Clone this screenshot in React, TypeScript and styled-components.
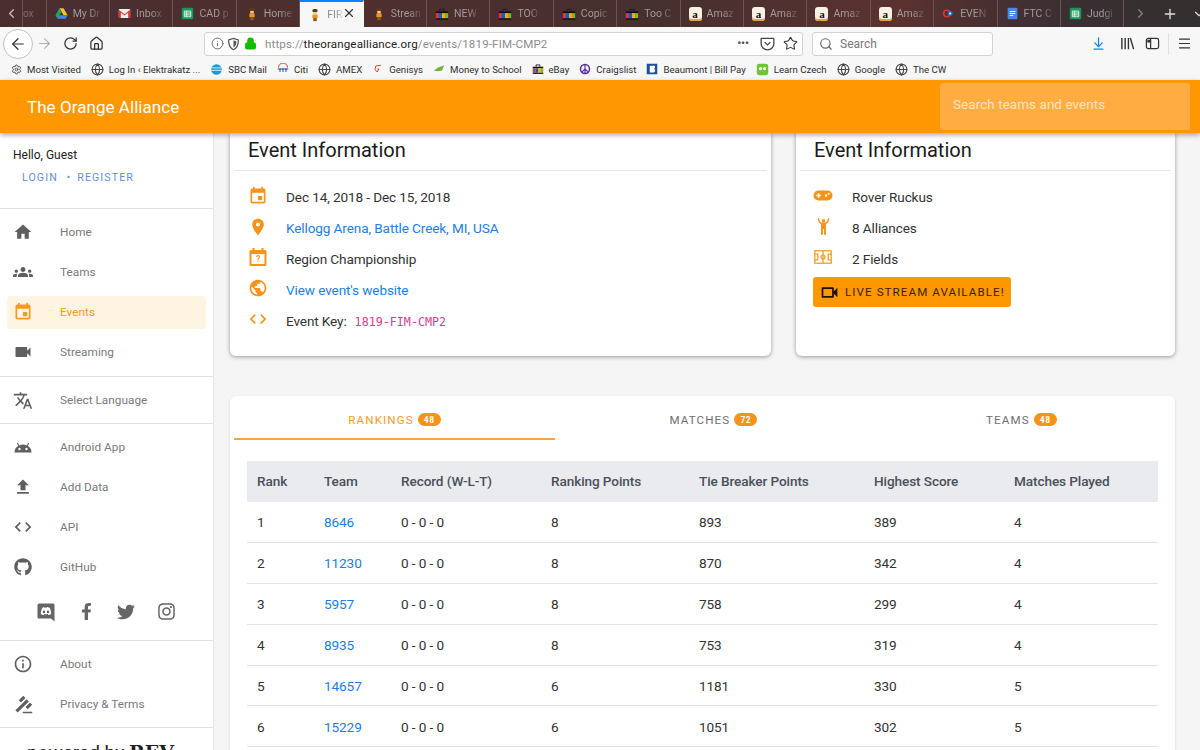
import React from "react";
import styled, { createGlobalStyle } from "styled-components";
import { ArrowLeft, ArrowRight, RotateCw, Home as HomeLine, Info, Lock, Star, Search, ArrowDownToLine, Menu, X, Plus, ChevronDown, ChevronRight, ChevronLeft, Globe, Settings } from "lucide-react";
import { MdHome, MdGroups, MdEvent, MdVideocam, MdOutlineVideocam, MdTranslate, MdFileUpload, MdCode, MdInfoOutline, MdGavel, MdPlace, MdPublic } from "react-icons/md";
import { FaGithub, FaFacebookF, FaTwitter, FaInstagram } from "react-icons/fa";

const Global = createGlobalStyle`
  html, body { margin: 0; padding: 0; background: #f5f5f6; overflow: hidden; }
  * { box-sizing: border-box; }
  a { text-decoration: none; }
`;

const Page = styled.div`
  width: 1200px; height: 750px; overflow: hidden; display: flex; flex-direction: column;
  font-family: Roboto, "Liberation Sans", sans-serif;
`;
const TabStrip = styled.div`
  height: 27px; flex: none; display: flex; align-items: stretch; color: #a9a0a0;
  background: linear-gradient(90deg, #4a2e2f 0%, #4f2f30 30%, #46302f 55%, #5a3230 75%, #3b2f33 88%, #33302f 100%);
`;
const TabBack = styled.div`
  width: 23px; flex: none; display: flex; align-items: center; justify-content: center; color: #c9c2c2;
  border-right: 1px solid #6d5554;
`;
const StubTab = styled.div`
  width: 23.7px; flex: none; font-size: 10px; display: flex; align-items: center; color: #7e6c6c;
  border-right: 1px solid #6d5554;
`;
const BrowserTab = styled.div<{ $active?: boolean }>`
  width: 63.4px; flex: none; display: flex; align-items: center; gap: 5px; padding-left: 8px; white-space: nowrap;
  font-size: 10.5px; position: relative;
  border-right: 1px solid ${p => (p.$active ? "transparent" : "#6d5554")};
  background: ${p => (p.$active ? "#f7f7f8" : "transparent")};
  color: ${p => (p.$active ? "#8a8a8a" : "#a39a9a")};
  border-top: ${p => (p.$active ? "2px solid #0a84ff" : "0")};
`;
const TabLabel = styled.span`
  -webkit-mask-image: linear-gradient(90deg, #000 60%, rgba(0,0,0,.25) 100%);
  mask-image: linear-gradient(90deg, #000 60%, rgba(0,0,0,.25) 100%);
`;
const TabClose = styled.span`
  position: absolute; right: 7px; top: 4px; color: #333; display: flex;
`;
const StripEnd = styled.div`
  flex: 1; display: flex; align-items: center; color: #ddd; padding-left: 9px; gap: 14px;
`;
const NavBar = styled.div`
  height: 33px; flex: none; background: #f7f7f8; display: flex; align-items: center; color: #333;
`;
const BackCircle = styled.div`
  width: 30px; height: 30px; margin-left: 3px; flex: none; border-radius: 50%; border: 1px solid #c2c2c2; background: #fff;
  display: flex; align-items: center; justify-content: center;
`;
const NavIcon = styled.span<{ $gap: number; $dim?: boolean; $blue?: boolean }>`
  display: flex; flex: none; margin-left: ${p => p.$gap}px;
  color: ${p => (p.$blue ? "#0a84ff" : p.$dim ? "#b0b0b0" : "#333")};
`;
const UrlBar = styled.div`
  width: 599px; height: 24px; margin-left: 100px; flex: none; background: #fff; border: 1px solid #d3d3d3; border-radius: 3px;
  display: flex; align-items: center; padding: 0 4px 0 6px; font-size: 11.6px; color: #8d8d8d; letter-spacing: .12px;
`;
const UrlHost = styled.span` color: #222; `;
const UrlText = styled.span` margin-left: 8px; flex: 1; white-space: nowrap; `;
const UrlDots = styled.span` font-weight: 700; color: #555; letter-spacing: 0; margin-right: 11px; font-size: 11px; `;
const SearchBar = styled.div`
  width: 181px; height: 24px; margin-left: 9px; flex: none; background: #fff; border: 1px solid #d3d3d3; border-radius: 3px;
  display: flex; align-items: center; gap: 7px; padding-left: 6px; font-size: 12px; color: #777;
`;
const NavDivider = styled.span`
  width: 1px; height: 22px; background: #e0e0e0; margin-left: 8px; flex: none;
`;
const Bookmarks = styled.div`
  height: 20px; flex: none; background: #f7f7f8; display: flex; align-items: center; gap: 10px; padding: 0 0 2px 11px;
  font-size: 9.65px; color: #2e2e2e; white-space: nowrap;
`;
const Bookmark = styled.span`
  display: flex; align-items: center; gap: 5px;
`;
const Amazon = styled.span`
  width: 13px; height: 14px; border-radius: 3px; background: #f8f0e2; color: #111; font: 700 11px "Liberation Serif", serif;
  box-shadow: inset 0 -2px #e8a33d; display: flex; align-items: center; justify-content: center; flex: none;
`;
const Header = styled.header`
  height: 53px; flex: none; background: #ff9800; display: flex; align-items: center; justify-content: space-between;
  padding: 0 10px 0 27px; position: relative; z-index: 2; box-shadow: 0 2px 5px rgba(0,0,0,.35);
`;
const Brand = styled.div`
  color: #fff; font-size: 17px; letter-spacing: .05px;
`;
const HeaderSearch = styled.div`
  width: 250px; height: 47px; background: #ffad42; border-radius: 3px; color: #ffe5c2; font-size: 13.4px; letter-spacing: .1px;
  display: flex; align-items: center; padding: 0 0 4px 13px;
`;
const Body = styled.div`
  flex: 1; min-height: 0; display: flex;
`;
const Side = styled.aside`
  width: 214px; flex: none; background: #fff; border-right: 1px solid #e6e6e6; overflow: hidden;
`;
const Greeting = styled.div`
  height: 76px; padding: 15px 0 0 13px; font-size: 12px; color: #222; border-bottom: 1px solid #e2e2e2;
`;
const AuthRow = styled.div`
  display: flex; align-items: center; margin: 9px 0 0 9px; font-size: 10.6px; letter-spacing: 1.1px; color: #5f8fdc;
`;
const AuthDot = styled.span` margin: 0 6px 0 9px; font-size: 10px; `;
const NavGroup = styled.div<{ $line?: boolean; $top: number; $bottom?: number }>`
  padding: ${p => p.$top}px 0 ${p => p.$bottom ?? 3}px; border-bottom: ${p => (p.$line ? "1px solid #e2e2e2" : "0")};
`;
const NavItem = styled.div<{ $active?: boolean }>`
  height: 40px; display: flex; align-items: center; font-size: 11.8px; letter-spacing: .02px; position: relative; padding-left: 13px;
  color: ${p => (p.$active ? "#f79a1e" : "#7a7a7a")};
  ${p => p.$active ? `&::before { content: ""; position: absolute; left: 7px; right: 7px; top: 4px; bottom: 3px; background: #fff3e2; border-radius: 4px; }
  & > * { position: relative; }` : ""}
`;
const NavGlyph = styled.span<{ $active?: boolean }>`
  width: 20px; flex: none; display: flex; justify-content: center; color: ${p => (p.$active ? "#f79a1e" : "#5f5f5f")};
`;
const NavLabel = styled.span` margin-left: 27px; `;
const Socials = styled.div`
  display: flex; align-items: center; gap: 22px; padding: 0 0 7px 36px; height: 51px; color: #666; border-bottom: 1px solid #e2e2e2;
`;
const SideFoot = styled.div`
  padding: 13px 0 0 27px; font-size: 19px; color: #222; white-space: nowrap;
`;
const Rev = styled.b` font-family: "DejaVu Serif", serif; font-size: 19px; `;
const Main = styled.main`
  flex: 1; min-width: 0; padding: 0 25px 0 16px; overflow: hidden;
`;
const CardRow = styled.div`
  display: flex; gap: 25px; height: 223px;
`;
const InfoCard = styled.section<{ $w: number }>`
  width: ${p => p.$w}px; flex: none; background: #fff; border-radius: 0 0 6px 6px; padding: 0 4px; box-shadow: 0 1px 4px rgba(0,0,0,.38);
`;
const CardTitle = styled.h2`
  margin: 0; height: 38px; padding: 4px 0 0 14px; font-weight: 400; font-size: 20px; line-height: 27px; color: #1a1a1a; border-bottom: 1px solid #e6e6e6;
`;
const InfoList = styled.div<{ $left: number }>` padding: 11px 0 0 ${p => p.$left}px; `;
const InfoRow = styled.div`
  height: 30.8px; display: flex; align-items: center; font-size: 13.6px; letter-spacing: -.12px; color: #333;
`;
const InfoGlyph = styled.span`
  width: 20px; flex: none; display: flex; justify-content: center; color: #f7931a; margin-top: -3px;
`;
const RowText = styled.span<{ $gap: number }>` margin-left: ${p => p.$gap}px; `;
const Link = styled.a` color: #1a80e8; `;
const KeyCode = styled.code`
  font-family: "DejaVu Sans Mono", "Liberation Mono", monospace; font-size: 11.7px; letter-spacing: 0; color: #d6418e; margin-left: 8px;
`;
const StreamButton = styled.div`
  width: 198px; height: 30px; margin-top: 3px; background: #ff9800; border-radius: 3px; color: #3b2100; font-size: 11.6px; letter-spacing: 1.08px;
  display: flex; align-items: center; gap: 5px; padding-left: 6px; white-space: nowrap;
`;
const DataCard = styled.section`
  margin-top: 40px; height: 400px; background: #fff; border-radius: 6px 6px 0 0; padding: 0 4px; box-shadow: 0 1px 3px rgba(0,0,0,.12);
`;
const TabsRow = styled.div` display: flex; height: 44px; `;
const DataTab = styled.div<{ $active?: boolean }>`
  flex: 1 1 auto; display: flex; align-items: center; justify-content: center; gap: 4px; padding-top: 5px; font-size: 11.6px; letter-spacing: 1.12px;
  color: ${p => (p.$active ? "#f79a1e" : "#6f6f6f")};
  border-bottom: 2px solid ${p => (p.$active ? "#f9a63a" : "transparent")};
`;
const Badge = styled.span`
  height: 13px; min-width: 23px; border-radius: 7px; background: #f7931a; color: #fff; font-size: 8.5px; font-weight: 700; letter-spacing: .5px;
  display: inline-flex; align-items: center; justify-content: center;
`;
const Table = styled.div` margin: 21px 13px 0; `;
const cols = "67px 77px 150px 148px 175px 140px 1fr";
const HeadRow = styled.div`
  display: grid; grid-template-columns: ${cols}; height: 41px; align-items: center; background: #e9ebee; font-size: 13.6px; letter-spacing: -.1px; font-weight: 500; color: #49505a; padding-bottom: 1px;
  & > span { padding-left: 10px; }
`;
const Row = styled.div`
  display: grid; grid-template-columns: ${cols}; height: 40.9px; align-items: center; font-size: 13.6px; letter-spacing: -.1px; color: #333; border-bottom: 1px solid #e4e4e4; padding-top: 1px;
  & > span, & > a { padding-left: 10px; }
`;

const I = (p: { s?: number; children: React.ReactNode; vb?: string }) => (
  <svg width={p.s ?? 12} height={p.s ?? 12} viewBox={p.vb ?? "0 0 16 16"} style={{ flex: "none" }}>{p.children}</svg>
);

const Fav = ({ k, s }: { k: string; s?: number }) => {
  switch (k) {
    case "drive":
      return <I s={13}><path d="M5.5 1.5h5l5 8.5h-5z" fill="#f7c325" /><path d="M5.5 1.5 .5 10l2.5 4.5L8 6z" fill="#1da462" /><path d="M3 14.5h10l2.5-4.5h-10z" fill="#4285f4" /></I>;
    case "mail":
      return <I s={13}><rect x="1" y="2.5" width="14" height="11" rx="1" fill="#eee" /><path d="M1 3.5 8 9l7-5.5V13.5h-2.5V7L8 10.5 3.5 7v6.5H1z" fill="#d8392b" /></I>;
    case "sheet":
      return <I s={13}><rect x="1" y="1" width="14" height="14" rx="1.5" fill="#17995c" /><path d="M4 5h8v7H4zM4 7.4h8M4 9.7h8M7 5v7" fill="none" stroke="#fff" strokeWidth="1" /></I>;
    case "toa":
      return <I s={14}><rect x="5" y="1" width="6" height="4" rx="2" fill="#5a3a16" /><rect x="6" y="4.5" width="4" height="3" fill="#f3c89b" /><rect x="5" y="7.5" width="6" height="4" fill="#f7931a" /><rect x="6" y="11.5" width="4" height="3.5" fill="#8b5a1f" /></I>;
    case "ebay":
      return <I s={s ?? 14}><path d="M5.5 5V2.500h5V5" fill="none" stroke="#222" strokeWidth="1.200" /><rect x="1" y="5" width="14" height="2" fill="#111" /><rect x="1" y="7" width="3.500" height="6" fill="#e53238" /><rect x="4.500" y="7" width="3.500" height="6" fill="#0064d2" /><rect x="8" y="7" width="3.500" height="6" fill="#f5af02" /><rect x="11.500" y="7" width="3.500" height="6" fill="#86b817" /><rect x="1" y="13" width="14" height="1.500" fill="#111" /></I>;
    case "event":
      return <I s={13}><circle cx="6" cy="8" r="4" fill="none" stroke="#d33" strokeWidth="2" /><circle cx="10" cy="8" r="3" fill="#2d6fd2" /><circle cx="10" cy="8" r="1.200" fill="#fff" /></I>;
    case "docs":
      return <I s={13}><rect x="2" y="1" width="12" height="14" rx="1.500" fill="#4a86e8" /><path d="M4.500 5.500h7M4.500 8h7M4.500 10.500h4.500" stroke="#fff" strokeWidth="1.100" /></I>;
    default:
      return null;
  }
};

const tabs: [string, string][] = [
  ["drive", "My Dr"], ["mail", "Inbox"], ["sheet", "CAD p"], ["toa", "Home"], ["toa", "FIR"], ["toa", "Strean"], ["ebay", "NEW"], ["ebay", "TOO"], ["ebay", "Copic"], ["ebay", "Too C"],
  ["amz", "Amaz"], ["amz", "Amaz"], ["amz", "Amaz"], ["amz", "Amaz"], ["event", "EVEN"], ["docs", "FTC C"], ["sheet", "Judgi"],
];

const DiscordIcon = () => (
  <svg width="20" height="20" viewBox="0 0 20 20"><path fillRule="evenodd" fill="currentColor" d="M3 1.500h14a1.500 1.500 0 0 1 1.500 1.500v16.500L15 16.500H3A1.500 1.500 0 0 1 1.500 15V3A1.500 1.500 0 0 1 3 1.500ZM6.500 5.800C5.200 8 4.800 10 4.800 11.700c1 1 2 1.300 2.800 1.300l.7-1c1.100.3 2.300.3 3.400 0l.7 1c.8 0 1.800-.3 2.800-1.300 0-1.700-.4-3.700-1.700-5.900-1-.5-1.800-.7-2.500-.7l-.3.6a8 8 0 0 0-2.800 0L7.600 5.100c-.4.100-.7.300-1.100.7ZM8 8.600a1.200 1.300 0 1 1 0 2.600 1.200 1.300 0 0 1 0-2.600Zm4 0a1.200 1.300 0 1 1 0 2.600 1.200 1.300 0 0 1 0-2.600Z" /></svg>
);
const AndroidHead = () => (
  <svg width="20" height="20" viewBox="0 0 20 20" fill="currentColor"><path fillRule="evenodd" d="M1.500 15.500c0-3 1.400-5.200 3.700-6.400L3.800 6.300l1-.6L6.300 8.400a9.500 9.500 0 0 1 7.400 0l1.500-2.700 1 .6-1.400 2.800c2.300 1.200 3.700 3.400 3.700 6.400ZM6.500 10.800a1.200 1.200 0 1 0 0 2.400 1.200 1.200 0 0 0 0-2.400Zm7 0a1.200 1.200 0 1 0 0 2.400 1.200 1.200 0 0 0 0-2.400Z" /></svg>
);
const CalendarQ = () => (
  <svg width="20" height="20" viewBox="0 0 20 20" fill="currentColor"><path fillRule="evenodd" d="M4.500 1h2v2h7V1h2v2H17a1.500 1.500 0 0 1 1.500 1.500v13A1.500 1.500 0 0 1 17 19H3a1.500 1.500 0 0 1-1.500-1.500v-13A1.500 1.500 0 0 1 3 3h1.500ZM3.500 7v10h13V7Z" /><path d="M8 9.800c.2-1.200 1-1.800 2.100-1.800 1.200 0 2 .8 2 1.800 0 1.400-1.500 1.500-1.500 2.900H9.400c0-2 1.500-2 1.500-2.900 0-.4-.3-.7-.8-.7-.4 0-.8.300-.9.800ZM9.400 13.500h1.200v1.300H9.400Z" /></svg>
);
const GamePad = () => (
  <svg width="20" height="20" viewBox="0 0 20 20" fill="currentColor"><path fillRule="evenodd" d="M5.500 4.500h9a5 5 0 0 1 0 10h-9a5 5 0 0 1 0-10ZM4.800 7.300v1.400H3.400v1.600h1.400v1.400h1.600v-1.400h1.400V8.700H6.400V7.300ZM13 8.300a1.200 1.200 0 1 0 0 2.400 1.200 1.200 0 0 0 0-2.400Zm2.700-1.600a1.100 1.100 0 1 0 0 2.200 1.100 1.100 0 0 0 0-2.200Z" /></svg>
);
const HandsUp = () => (
  <svg width="15" height="19" viewBox="0 0 18 20" fill="currentColor"><circle cx="9" cy="3" r="2.100" /><path d="M2 0h1.700c.3 3 1.500 4.700 3.300 5.300h4c1.800-.6 3-2.300 3.300-5.300H16c-.3 3.800-1.800 6-4 7v13h-2.300v-7H8.300v7H6V7C3.800 6 2.300 3.800 2 0Z" /></svg>
);
const FieldIcon = () => (
  <svg width="18" height="14" viewBox="0 0 18 14" fill="none" stroke="currentColor" strokeWidth="1.200"><rect x=".8" y=".8" width="16.400" height="12.400" /><path d="M9 .8v12.400" /><circle cx="9" cy="7" r="2" /><path d="M.8 4h3v6h-3M17.200 4h-3v6h3" /></svg>
);
const PocketIcon = () => (
  <svg width="15" height="15" viewBox="0 0 16 16" fill="none" stroke="#444" strokeWidth="1.400"><path d="M2 2.500h12a.8.8 0 0 1 .8.8V8a6.800 6.800 0 0 1-13.600 0V3.300a.8.8 0 0 1 .8-.8Z" /><path d="m5 6.500 3 3 3-3" /></svg>
);
const ShieldIcon = () => (
  <svg width="13" height="14" viewBox="0 0 16 16"><path d="M8 1 2 3c0 6 1.500 10 6 12 4.500-2 6-6 6-12Z" fill="none" stroke="#555" strokeWidth="1.500" /><path d="M8 3.500v9c2.500-1.500 3.500-4 3.600-7.500Z" fill="#555" /></svg>
);
const LibraryIcon = () => (
  <svg width="15" height="15" viewBox="0 0 16 16" stroke="#333" strokeWidth="1.500" fill="none"><path d="M2 2v12M5.500 2v12M9 2v12M11 2l3.500 12" /></svg>
);
const SidebarIcon = () => (
  <svg width="15" height="15" viewBox="0 0 16 16" fill="none" stroke="#333" strokeWidth="1.300"><rect x="1.500" y="2.500" width="13" height="11" rx="2" /><path d="M6 2.500v11" /><path d="M2.500 4h3v3h-3z" fill="#333" stroke="none" /></svg>
);

const rows = [
  ["1", "8646", "8", "893", "389", "4"],
  ["2", "11230", "8", "870", "342", "4"],
  ["3", "5957", "8", "758", "299", "4"],
  ["4", "8935", "8", "753", "319", "4"],
  ["5", "14657", "6", "1181", "330", "5"],
  ["6", "15229", "6", "1051", "302", "5"],
];

const globe = <Globe size={13} color="#444" />;

export default function App() {
  return (
    <Page>
      <Global />
      <TabStrip>
        <TabBack><ChevronLeft size={15} /></TabBack>
        <StubTab>ox</StubTab>
        {tabs.map((t, i) => (
          <BrowserTab key={i} $active={i === 4}>
            {t[0] === "amz" ? <Amazon>a</Amazon> : <Fav k={t[0]} />}
            <TabLabel>{t[1]}</TabLabel>
            {i === 4 && <TabClose><X size={14} /></TabClose>}
          </BrowserTab>
        ))}
        <StripEnd>
          <ChevronRight size={15} color="#8a8080" />
          <Plus size={16} />
          <ChevronDown size={14} />
        </StripEnd>
      </TabStrip>
      <NavBar>
        <BackCircle><ArrowLeft size={18} strokeWidth={1.6} /></BackCircle>
        <NavIcon $gap={3} $dim><ArrowRight size={17} strokeWidth={1.5} /></NavIcon>
        <NavIcon $gap={10}><RotateCw size={15} strokeWidth={2} /></NavIcon>
        <NavIcon $gap={11}><HomeLine size={15} strokeWidth={2} /></NavIcon>
        <UrlBar>
          <Info size={13} strokeWidth={1.6} color="#555" />
          <NavIcon $gap={3}><ShieldIcon /></NavIcon>
          <NavIcon $gap={4}><Lock size={13} color="#12bc00" fill="#12bc00" strokeWidth={2} /></NavIcon>
          <UrlText>https://<UrlHost>theorangealliance.org</UrlHost>/events/1819-FIM-CMP2</UrlText>
          <UrlDots>•••</UrlDots>
          <PocketIcon />
          <NavIcon $gap={8}><Star size={15} strokeWidth={1.7} /></NavIcon>
        </UrlBar>
        <SearchBar><Search size={14} color="#666" />Search</SearchBar>
        <NavIcon $gap={98} $blue><ArrowDownToLine size={15} strokeWidth={2} /></NavIcon>
        <NavIcon $gap={14}><LibraryIcon /></NavIcon>
        <NavIcon $gap={10}><SidebarIcon /></NavIcon>
        <NavDivider />
        <NavIcon $gap={8}><Menu size={15} strokeWidth={1.8} /></NavIcon>
      </NavBar>
      <Bookmarks>
        <Bookmark><Settings size={11} color="#444" />Most Visited</Bookmark>
        <Bookmark>{globe}Log In ‹ Elektrakatz ...</Bookmark>
        <Bookmark><I s={13}><circle cx="8" cy="8" r="6.500" fill="#1a9bd7" /><path d="M2 6h12M1.500 9h13" stroke="#fff" strokeWidth="1" /></I>SBC Mail</Bookmark>
        <Bookmark><I s={12}><path d="M2 6a6 6 0 0 1 12 0" fill="none" stroke="#d9261c" strokeWidth="1.200" /><path d="M1 8h14M4 7v5M8 7v5M12 7v5" stroke="#1a4a9c" strokeWidth="1.300" /></I>Citi</Bookmark>
        <Bookmark>{globe}AMEX</Bookmark>
        <Bookmark><I s={12}><path d="M12 3 5 4l-1 5 3 3 2-4-2 0" fill="none" stroke="#c33" strokeWidth="1.200" /></I>Genisys</Bookmark>
        <Bookmark><I s={12}><path d="M1 10 7 6l8-3-3 7-6 1z" fill="#6cb33f" /></I>Money to School</Bookmark>
        <Bookmark><Fav k="ebay" s={12} />eBay</Bookmark>
        <Bookmark><I s={12}><circle cx="8" cy="8" r="6" fill="none" stroke="#5a2a9c" strokeWidth="2" /><path d="M8 2v12M8 8 3.800 12.200M8 8l4.200 4.200" stroke="#5a2a9c" strokeWidth="1.500" /></I>Craigslist</Bookmark>
        <Bookmark><I s={12}><rect x="1" y="1" width="14" height="14" fill="#1d4f9c" /><path d="M5 3.500h4.500a2.200 2.200 0 0 1 1 4.300 2.300 2.300 0 0 1-1 4.700H5Z" fill="#fff" /></I>Beaumont | Bill Pay</Bookmark>
        <Bookmark><I s={13}><rect x="1" y="1" width="14" height="14" rx="3" fill="#6ac72f" /><circle cx="5.500" cy="7" r="2" fill="#fff" /><circle cx="10.500" cy="7" r="2" fill="#fff" /><path d="M7 10h2l-1 1.500z" fill="#f7931a" /></I>Learn Czech</Bookmark>
        <Bookmark>{globe}Google</Bookmark>
        <Bookmark>{globe}The CW</Bookmark>
      </Bookmarks>
      <Header>
        <Brand>The Orange Alliance</Brand>
        <HeaderSearch>Search teams and events</HeaderSearch>
      </Header>
      <Body>
        <Side>
          <Greeting>
            Hello, Guest
            <AuthRow>LOGIN<AuthDot>•</AuthDot>REGISTER</AuthRow>
          </Greeting>
          <NavGroup $line $top={3} $bottom={4}>
            <NavItem><NavGlyph><MdHome size={20} /></NavGlyph><NavLabel>Home</NavLabel></NavItem>
            <NavItem><NavGlyph><MdGroups size={20} /></NavGlyph><NavLabel>Teams</NavLabel></NavItem>
            <NavItem $active><NavGlyph $active><MdEvent size={20} /></NavGlyph><NavLabel>Events</NavLabel></NavItem>
            <NavItem><NavGlyph><MdVideocam size={20} /></NavGlyph><NavLabel>Streaming</NavLabel></NavItem>
          </NavGroup>
          <NavGroup $line $top={3}>
            <NavItem><NavGlyph><MdTranslate size={21} /></NavGlyph><NavLabel>Select Language</NavLabel></NavItem>
          </NavGroup>
          <NavGroup $top={3}>
            <NavItem><NavGlyph><AndroidHead /></NavGlyph><NavLabel>Android App</NavLabel></NavItem>
            <NavItem><NavGlyph><MdFileUpload size={20} /></NavGlyph><NavLabel>Add Data</NavLabel></NavItem>
            <NavItem><NavGlyph><MdCode size={20} /></NavGlyph><NavLabel>API</NavLabel></NavItem>
            <NavItem><NavGlyph><FaGithub size={18} /></NavGlyph><NavLabel>GitHub</NavLabel></NavItem>
          </NavGroup>
          <Socials>
            <DiscordIcon />
            <FaFacebookF size={17} />
            <FaTwitter size={18} />
            <FaInstagram size={19} />
          </Socials>
          <NavGroup $line $top={3}>
            <NavItem><NavGlyph><MdInfoOutline size={20} /></NavGlyph><NavLabel>About</NavLabel></NavItem>
            <NavItem><NavGlyph><MdGavel size={19} transform="scale(-1 1)" /></NavGlyph><NavLabel>Privacy &amp; Terms</NavLabel></NavItem>
          </NavGroup>
          <SideFoot>powered by <Rev>REV</Rev></SideFoot>
        </Side>
        <Main>
          <CardRow>
            <InfoCard $w={541}>
              <CardTitle>Event Information</CardTitle>
              <InfoList $left={14}>
                <InfoRow><InfoGlyph><MdEvent size={20} /></InfoGlyph><RowText $gap={18}>Dec 14, 2018 - Dec 15, 2018</RowText></InfoRow>
                <InfoRow><InfoGlyph><MdPlace size={20} /></InfoGlyph><RowText $gap={18}><Link>Kellogg Arena, Battle Creek, MI, USA</Link></RowText></InfoRow>
                <InfoRow><InfoGlyph><CalendarQ /></InfoGlyph><RowText $gap={18}>Region Championship</RowText></InfoRow>
                <InfoRow><InfoGlyph><MdPublic size={20} /></InfoGlyph><RowText $gap={18}><Link>View event's website</Link></RowText></InfoRow>
                <InfoRow><InfoGlyph><MdCode size={20} /></InfoGlyph><RowText $gap={18}>Event Key:<KeyCode>1819-FIM-CMP2</KeyCode></RowText></InfoRow>
              </InfoList>
            </InfoCard>
            <InfoCard $w={379}>
              <CardTitle>Event Information</CardTitle>
              <InfoList $left={13}>
                <InfoRow><InfoGlyph><GamePad /></InfoGlyph><RowText $gap={19}>Rover Ruckus</RowText></InfoRow>
                <InfoRow><InfoGlyph><HandsUp /></InfoGlyph><RowText $gap={19}>8 Alliances</RowText></InfoRow>
                <InfoRow><InfoGlyph><FieldIcon /></InfoGlyph><RowText $gap={19}>2 Fields</RowText></InfoRow>
                <StreamButton><MdOutlineVideocam size={21} color="#1d1200" />LIVE STREAM AVAILABLE!</StreamButton>
              </InfoList>
            </InfoCard>
          </CardRow>
          <DataCard>
            <TabsRow>
              <DataTab $active>RANKINGS <Badge>48</Badge></DataTab>
              <DataTab>MATCHES <Badge>72</Badge></DataTab>
              <DataTab>TEAMS <Badge>48</Badge></DataTab>
            </TabsRow>
            <Table>
              <HeadRow>
                <span>Rank</span><span>Team</span><span>Record (W-L-T)</span><span>Ranking Points</span><span>Tie Breaker Points</span><span>Highest Score</span><span>Matches Played</span>
              </HeadRow>
              {rows.map(r => (
                <Row key={r[0]}>
                  <span>{r[0]}</span>
                  <Link>{r[1]}</Link>
                  <span>0 - 0 - 0</span>
                  <span>{r[2]}</span>
                  <span>{r[3]}</span>
                  <span>{r[4]}</span>
                  <span>{r[5]}</span>
                </Row>
              ))}
            </Table>
          </DataCard>
        </Main>
      </Body>
    </Page>
  );
}
